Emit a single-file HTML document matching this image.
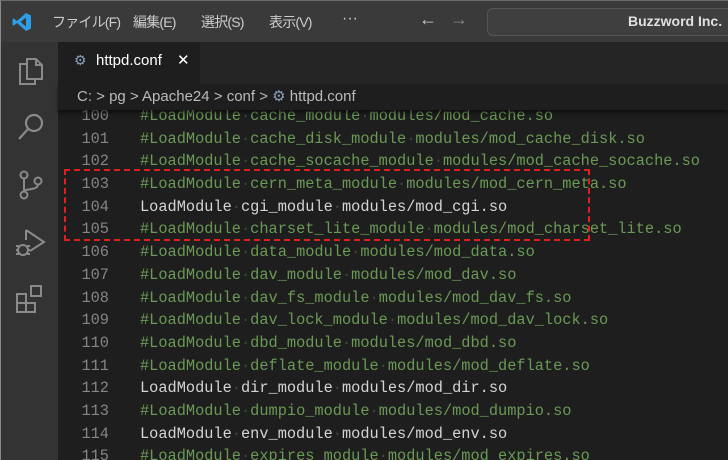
<!DOCTYPE html>
<html><head><meta charset="utf-8"><style>
*{margin:0;padding:0;box-sizing:border-box}
body{width:728px;height:460px;overflow:hidden;background:#1e1e1e;position:relative;font-family:"Segoe UI","Liberation Sans","Noto Sans CJK JP",sans-serif}
#title{position:absolute;left:0;top:0;width:728px;height:42px;background:#3a3a3a;border-top:1px solid #6a6a6a;border-left:1px solid #8a8a8a}
.menu{position:absolute;top:11px;color:#cccccc;font-size:14px;letter-spacing:-0.8px}
#search{position:absolute;left:486px;top:7px;width:250px;height:28px;border:1px solid #555;border-radius:6px;background:#3f3f3f;color:#e0e0e0;font-size:14px;font-weight:bold;padding:4px 0 0 140px}
#act{position:absolute;left:0;top:42px;width:58px;height:418px;background:#333333;border-left:1px solid #8a8a8a}
#tabs{position:absolute;left:58px;top:42px;width:670px;height:42px;background:#252526}
#tab{position:absolute;left:0;top:0;width:142px;height:42px;background:#1e1e1e;color:#fff;font-size:15px;padding:10px 0 0 38px}
#crumb{position:absolute;left:58px;top:84px;width:670px;height:26px;background:#1e1e1e;color:#bbbbbb;font-size:15px;padding:3px 0 0 19px;box-shadow:0 3px 4px rgba(0,0,0,.5);z-index:2}
#code{position:absolute;left:58px;top:110px;width:670px;height:350px;overflow:hidden}
#lines{position:absolute;left:0;top:-5px;font-family:"Liberation Mono",monospace;font-size:15.3px;line-height:22.7px}
.l{height:22.7px;white-space:pre;position:relative}
.n{position:absolute;left:0;width:51px;text-align:right;color:#858585}
.t{position:absolute;left:82px}
.c{color:#6a9955}.w{color:#d4d4d4}.d{color:#3f4a3a}
#box{position:absolute;left:64px;top:169px;width:526px;height:72px;border:2px dashed #e0201f;z-index:3}
</style></head><body>
<div id="title">
<svg style="position:absolute;left:11px;top:11px" width="20" height="20" viewBox="0 0 20 20"><path d="M14 1 L19 3.5 V16.5 L14 19 L5 11 L1.8 13.6 L0.5 12.6 V7.4 L1.8 6.4 L5 9 Z M14 5.5 L8.5 10 L14 14.5 Z" fill="#2f9ee8"/></svg>
<span class="menu" style="left:51px">ファイル(F)</span>
<span class="menu" style="left:132px">編集(E)</span>
<span class="menu" style="left:200px">選択(S)</span>
<span class="menu" style="left:268px">表示(V)</span>
<span class="menu" style="left:341px;top:9px;font-size:16px;letter-spacing:0">···</span>
<span class="menu" style="left:418px;top:8px;font-size:18px">←</span>
<span class="menu" style="left:449px;top:8px;font-size:18px;color:#888">→</span>
<div id="search">Buzzword Inc.</div>
</div>
<div id="act">
<svg style="position:absolute;left:16px;top:14px" width="28" height="30" viewBox="0 0 28 30" fill="none" stroke="#8a8a8a" stroke-width="2"><path d="M10 3h9l6 6v14H10z M19 3v6h6"/><path d="M10 8H3v20h15v-5"/></svg>
<svg style="position:absolute;left:15px;top:70px" width="30" height="30" viewBox="0 0 30 30" fill="none" stroke="#8a8a8a" stroke-width="2.2"><circle cx="18" cy="11" r="8"/><path d="M12 17L3 27"/></svg>
<svg style="position:absolute;left:15px;top:128px" width="30" height="30" viewBox="0 0 30 30" fill="none" stroke="#8a8a8a" stroke-width="2"><circle cx="8" cy="5" r="3.5"/><circle cx="8" cy="25" r="3.5"/><circle cx="22" cy="11" r="3.5"/><path d="M8 8.5v13M22 14.5c0 6-14 4-14 7"/></svg>
<svg style="position:absolute;left:13px;top:184px" width="32" height="32" viewBox="0 0 32 32" fill="none" stroke="#8a8a8a" stroke-width="2"><path d="M12 4v10M12 4l18 12-14 9"/><circle cx="9" cy="24" r="5"/><path d="M2 20h3M2 24h2M2 28h3M13 20h3M14 24h2M13 28h3"/></svg>
<svg style="position:absolute;left:14px;top:242px" width="30" height="30" viewBox="0 0 30 30" fill="none" stroke="#8a8a8a" stroke-width="2"><path d="M2 10h9v9H2zM2 19h9v9H2zM11 19h9v9h-9zM16 2h10v10H16z"/></svg>
</div>
<div id="tabs"><div id="tab"><span style="position:absolute;left:16px;top:10px;color:#8aa0b8;font-size:14px">⚙</span>httpd.conf<span style="position:absolute;left:119px;top:9px;font-size:15px">✕</span></div></div>
<div id="crumb">C: &gt; pg &gt; Apache24 &gt; conf &gt; <span style="color:#8aa0b8">⚙</span> httpd.conf</div>
<div id="code"><div id="lines">
<div class="l"><span class="n">100</span><span class="t c">#LoadModule<span class="d">·</span>cache_module<span class="d">·</span>modules/mod_cache.so</span></div>
<div class="l"><span class="n">101</span><span class="t c">#LoadModule<span class="d">·</span>cache_disk_module<span class="d">·</span>modules/mod_cache_disk.so</span></div>
<div class="l"><span class="n">102</span><span class="t c">#LoadModule<span class="d">·</span>cache_socache_module<span class="d">·</span>modules/mod_cache_socache.so</span></div>
<div class="l"><span class="n">103</span><span class="t c">#LoadModule<span class="d">·</span>cern_meta_module<span class="d">·</span>modules/mod_cern_meta.so</span></div>
<div class="l"><span class="n">104</span><span class="t w">LoadModule<span class="d">·</span>cgi_module<span class="d">·</span>modules/mod_cgi.so</span></div>
<div class="l"><span class="n">105</span><span class="t c">#LoadModule<span class="d">·</span>charset_lite_module<span class="d">·</span>modules/mod_charset_lite.so</span></div>
<div class="l"><span class="n">106</span><span class="t c">#LoadModule<span class="d">·</span>data_module<span class="d">·</span>modules/mod_data.so</span></div>
<div class="l"><span class="n">107</span><span class="t c">#LoadModule<span class="d">·</span>dav_module<span class="d">·</span>modules/mod_dav.so</span></div>
<div class="l"><span class="n">108</span><span class="t c">#LoadModule<span class="d">·</span>dav_fs_module<span class="d">·</span>modules/mod_dav_fs.so</span></div>
<div class="l"><span class="n">109</span><span class="t c">#LoadModule<span class="d">·</span>dav_lock_module<span class="d">·</span>modules/mod_dav_lock.so</span></div>
<div class="l"><span class="n">110</span><span class="t c">#LoadModule<span class="d">·</span>dbd_module<span class="d">·</span>modules/mod_dbd.so</span></div>
<div class="l"><span class="n">111</span><span class="t c">#LoadModule<span class="d">·</span>deflate_module<span class="d">·</span>modules/mod_deflate.so</span></div>
<div class="l"><span class="n">112</span><span class="t w">LoadModule<span class="d">·</span>dir_module<span class="d">·</span>modules/mod_dir.so</span></div>
<div class="l"><span class="n">113</span><span class="t c">#LoadModule<span class="d">·</span>dumpio_module<span class="d">·</span>modules/mod_dumpio.so</span></div>
<div class="l"><span class="n">114</span><span class="t w">LoadModule<span class="d">·</span>env_module<span class="d">·</span>modules/mod_env.so</span></div>
<div class="l"><span class="n">115</span><span class="t c">#LoadModule<span class="d">·</span>expires_module<span class="d">·</span>modules/mod_expires.so</span></div>
</div></div>
<div id="box"></div>
</body></html>
